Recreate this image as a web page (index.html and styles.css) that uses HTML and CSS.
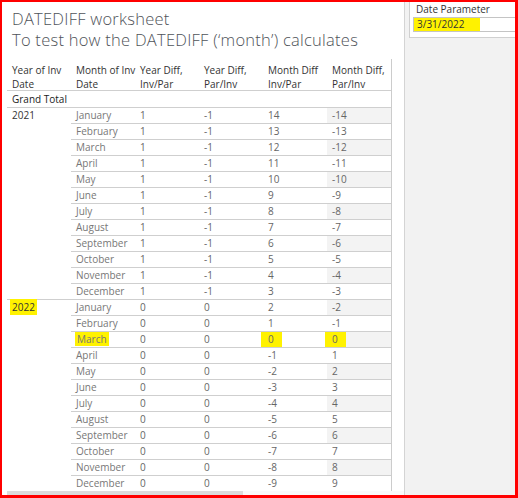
FILE: index.html
```html
<!DOCTYPE html>
<html>
<head>
<meta charset="utf-8">
<link rel="stylesheet" href="styles.css">
</head>
<body>
<div class="frame">
  <div class="main">
    <div class="title">
      <div>DATEDIFF worksheet</div>
      <div>To test how the DATEDIFF (‘month’) calculates</div>
    </div>
    <div class="table">
      <div class="head">
        <div class="hc">Year of Inv<br>Date</div>
        <div class="hc">Month of Inv<br>Date</div>
        <div class="hc">Year Diff,<br>Inv/Par</div>
        <div class="hc">Year Diff,<br>Par/Inv</div>
        <div class="hc">Month Diff<br>Inv/Par</div>
        <div class="hc">Month Diff,<br>Par/Inv</div>
      </div>
      <div class="grand">Grand Total</div>
      <div class="group">
        <div class="year">2021</div>
        <div class="rows">
          <div class="row"><span class="m">January</span><span>1</span><span>-1</span><span>14</span><span class="s">-14</span></div>
          <div class="row"><span class="m">February</span><span>1</span><span>-1</span><span>13</span><span>-13</span></div>
          <div class="row"><span class="m">March</span><span>1</span><span>-1</span><span>12</span><span class="s">-12</span></div>
          <div class="row"><span class="m">April</span><span>1</span><span>-1</span><span>11</span><span>-11</span></div>
          <div class="row"><span class="m">May</span><span>1</span><span>-1</span><span>10</span><span class="s">-10</span></div>
          <div class="row"><span class="m">June</span><span>1</span><span>-1</span><span>9</span><span>-9</span></div>
          <div class="row"><span class="m">July</span><span>1</span><span>-1</span><span>8</span><span class="s">-8</span></div>
          <div class="row"><span class="m">August</span><span>1</span><span>-1</span><span>7</span><span>-7</span></div>
          <div class="row"><span class="m">September</span><span>1</span><span>-1</span><span>6</span><span class="s">-6</span></div>
          <div class="row"><span class="m">October</span><span>1</span><span>-1</span><span>5</span><span>-5</span></div>
          <div class="row"><span class="m">November</span><span>1</span><span>-1</span><span>4</span><span class="s">-4</span></div>
          <div class="row"><span class="m">December</span><span>1</span><span>-1</span><span>3</span><span>-3</span></div>
        </div>
      </div>
      <div class="group last">
        <div class="year"><span class="hl hy">2022</span></div>
        <div class="rows">
          <div class="row"><span class="m">January</span><span>0</span><span>0</span><span>2</span><span class="s">-2</span></div>
          <div class="row"><span class="m">February</span><span>0</span><span>0</span><span>1</span><span>-1</span></div>
          <div class="row"><span class="m"><span class="hl hm">March</span></span><span>0</span><span>0</span><span><span class="hl hz">0</span></span><span class="s"><span class="hl hz">0</span></span></div>
          <div class="row"><span class="m">April</span><span>0</span><span>0</span><span>-1</span><span>1</span></div>
          <div class="row"><span class="m">May</span><span>0</span><span>0</span><span>-2</span><span class="s">2</span></div>
          <div class="row"><span class="m">June</span><span>0</span><span>0</span><span>-3</span><span>3</span></div>
          <div class="row"><span class="m">July</span><span>0</span><span>0</span><span>-4</span><span class="s">4</span></div>
          <div class="row"><span class="m">August</span><span>0</span><span>0</span><span>-5</span><span>5</span></div>
          <div class="row"><span class="m">September</span><span>0</span><span>0</span><span>-6</span><span class="s">6</span></div>
          <div class="row"><span class="m">October</span><span>0</span><span>0</span><span>-7</span><span>7</span></div>
          <div class="row"><span class="m">November</span><span>0</span><span>0</span><span>-8</span><span class="s">8</span></div>
          <div class="row"><span class="m">December</span><span>0</span><span>0</span><span>-9</span><span>9</span></div>
        </div>
      </div>
    </div>
    <div class="scroll"><div class="thumb"></div></div>
  </div>
  <div class="panel">
    <div class="card">
      <div class="label">Date Parameter</div>
      <div class="input"><span class="hl hd">3/31/2022</span></div>
    </div>
  </div>
</div>
</body>
</html>
```

FILE: styles.css
```css
* { box-sizing: border-box; }
html, body { margin: 0; padding: 0; }
body {
  width: 518px;
  height: 498px;
  overflow: hidden;
  font-family: "Open Sans", "Noto Sans", sans-serif;
  background: #fff;
}
.frame {
  display: flex;
  width: 518px;
  height: 498px;
  border-top: 2px solid #ff0000;
  border-left: 2px solid #ff0000;
  border-right: 3px solid #ff0000;
  border-bottom: 3px solid #ff0000;
}
.main {
  width: 403px;
  display: flex;
  flex-direction: column;
  background: #fff;
  border-right: 1px solid #d4d4d4;
}
.title {
  padding: 6px 0 0 10px;
  height: 57px;
  font-size: 16.5px;
  font-weight: 300;
  letter-spacing: 0.25px;
  line-height: 21px;
  color: #4f5359;
  white-space: nowrap;
}
.table {
  margin-left: 5px;
  width: 385px;
  border-right: 1px solid #cccccc;
  font-size: 10px;
  flex: 1;
}
.head {
  display: grid;
  grid-template-columns: repeat(6, 64px);
  height: 32px;
  border-bottom: 1px solid #cfcfcf;
  color: #333;
}
.hc {
  padding: 4px 0 0 5px;
  line-height: 14px;
  white-space: nowrap;
}
.grand {
  height: 17px;
  line-height: 16px;
  padding-left: 5px;
  border-bottom: 1px solid #cfcfcf;
  color: #222;
  font-weight: 500;
}
.group {
  display: flex;
  border-bottom: 1px solid #cfcfcf;
}
.group.last { border-bottom: none; }
.year {
  width: 64px;
  padding: 0 0 0 5px;
  line-height: 15px;
  color: #333;
}
.rows { flex: 1; }
.row {
  display: grid;
  grid-template-columns: repeat(5, 64px);
  height: 16px;
  border-bottom: 1px solid #cfcfcf;
  line-height: 15px;
  color: #666;
}
.rows .row:last-child { border-bottom: none; height: 15px; }
.row span { padding-left: 5px; white-space: nowrap; }
.row .m { color: #777; }
.row span.s { background: #f3f3f3; }
.row span.hl, .year span.hl { padding: 0; }
.hl { background: #fff200; }
.hy { display: inline-block; padding: 0 2px !important; margin-left: -2px; line-height: 16px; margin-top: -4px; }
.hm { display: inline-block; line-height: 14px; padding: 0 2px !important; margin-left: -1px; margin-top: -2px; }
.hz { display: inline-block; width: 21px; line-height: 15px; padding-left: 7px !important; margin-left: -7px; }
.scroll {
  height: 4px;
  margin-left: 5px;
  background: #fafafa;
}
.thumb {
  width: 236px;
  height: 4px;
  background: #dcdcdc;
}
.panel {
  flex: 1;
  background: #f2f2f2;
  padding-left: 4px;
}
.card {
  height: 36px;
  background: #fff;
  border-left: 1px solid #d0d0d0;
  border-bottom: 1px solid #d0d0d0;
  padding: 0 0 0 3px;
}
.label {
  font-size: 10px;
  line-height: 13px;
  color: #333;
  padding: 1px 0 0 3px;
}
.input {
  margin-top: 1px;
  height: 15px;
  border: 1px solid #c4c4c4;
  border-right: none;
  font-size: 10px;
  line-height: 13px;
  color: #333;
}
.hd { display: inline-block; width: 66px; height: 13px; padding-left: 3px; }
```
